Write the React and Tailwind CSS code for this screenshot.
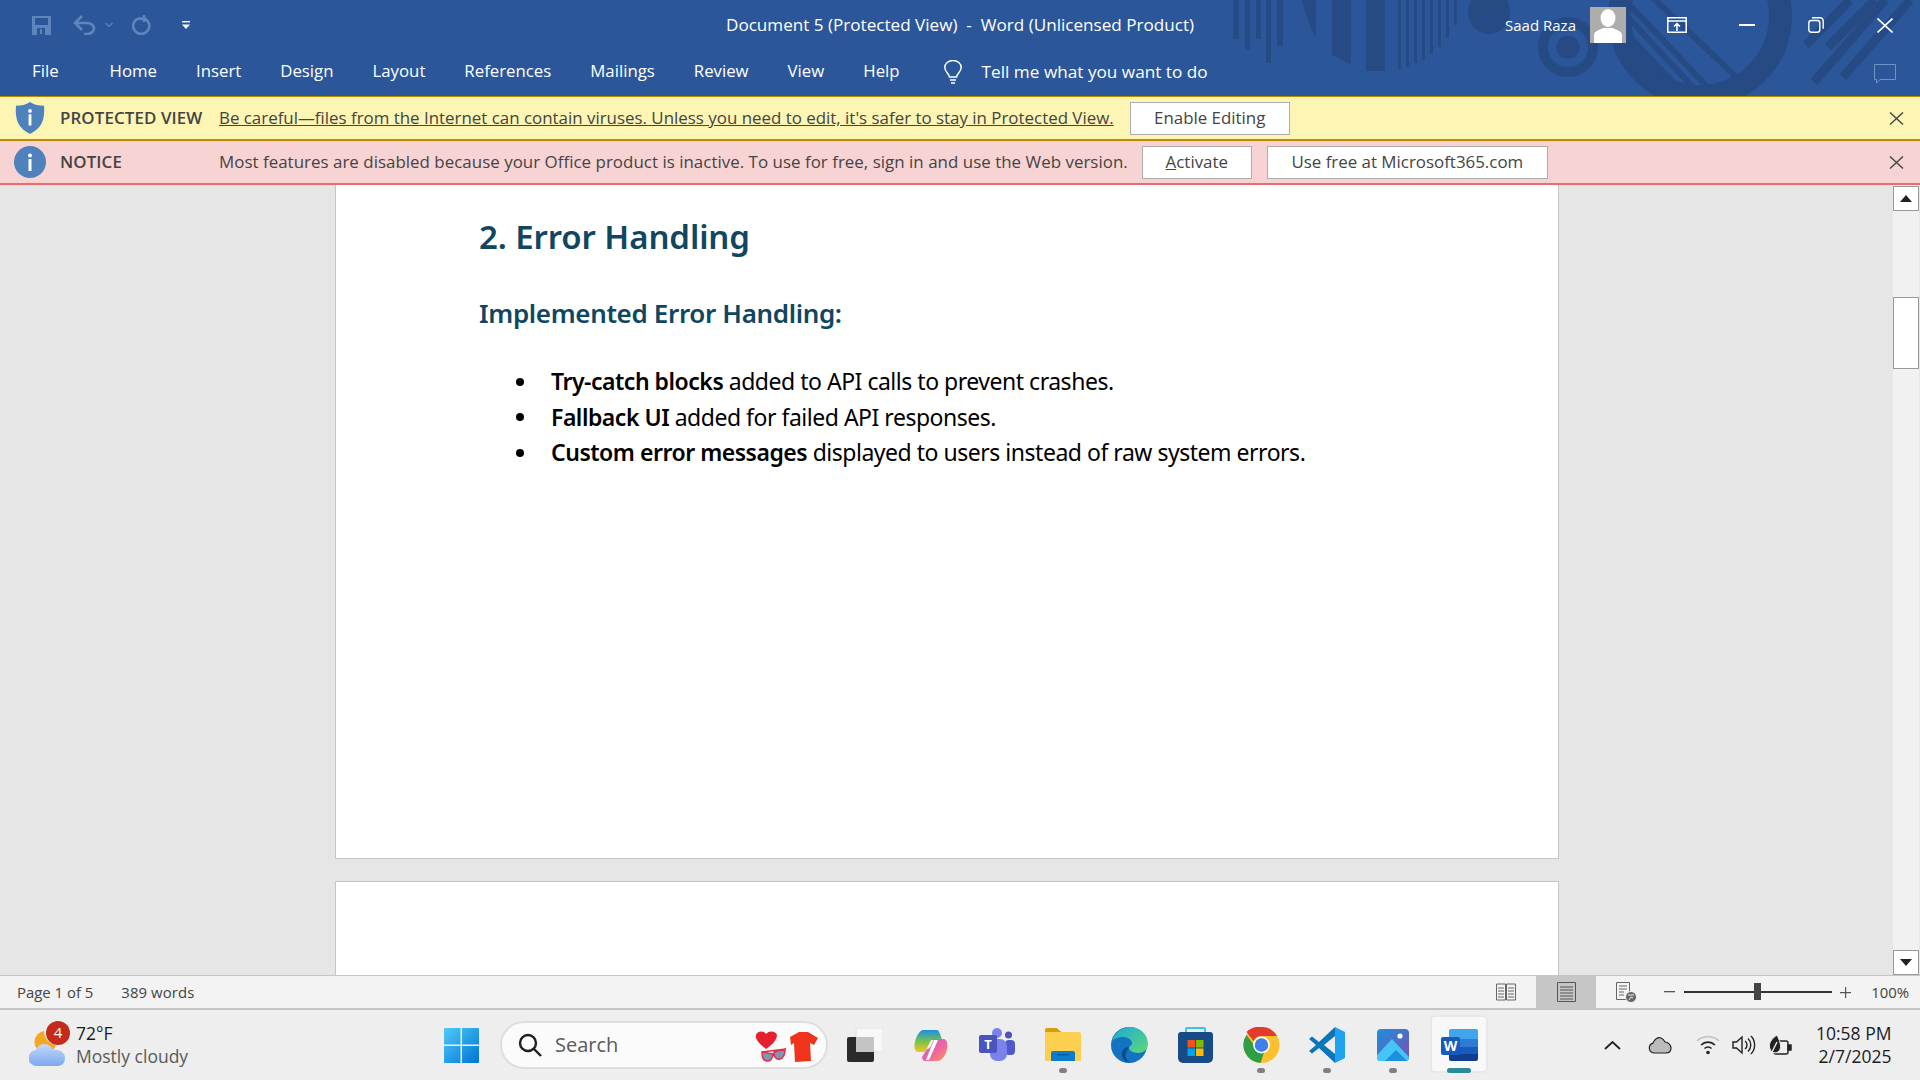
import { useState } from "react"

const uiFont = "font-['Open_Sans','Noto_Sans',sans-serif]"
const docFont = "font-['Noto_Sans','Open_Sans',sans-serif]"

const tabs = ["Home", "Insert", "Design", "Layout", "References", "Mailings", "Review", "View", "Help"]

const bullets = [
  ["Try-catch blocks", " added to API calls to prevent crashes."],
  ["Fallback UI", " added for failed API responses."],
  ["Custom error messages", " displayed to users instead of raw system errors."],
]

// Decorative pattern behind the title bar
const TitlePattern = () => (
  <svg className="absolute top-0 left-[1220px]" width="700" height="96" viewBox="0 0 700 96" fill="#264a84">
    <defs>
      <clipPath id="ringClip"><circle cx="480" cy="16" r="70" /></clipPath>
    </defs>
    <rect x="13" y="0" width="6" height="39" />
    <rect x="25" y="0" width="5" height="50" />
    <rect x="36" y="0" width="5" height="39" />
    <rect x="46" y="0" width="5" height="63" />
    <rect x="57" y="0" width="6" height="46" />
    <path d="M82 0Q86 20 96 37V0z" />
    <path d="M112 0V55L131 65V0z" />
    <rect x="146" y="0" width="19" height="71" />
    <rect x="178" y="0" width="3" height="69" />
    <rect x="186" y="0" width="3" height="67" />
    <rect x="194" y="0" width="3" height="63" />
    <rect x="202" y="0" width="3" height="60" />
    <rect x="210" y="0" width="3" height="54" />
    <rect x="218" y="0" width="3" height="47" />
    <rect x="226" y="0" width="3" height="38" />
    <rect x="234" y="0" width="3" height="25" />
    <ellipse cx="269" cy="12" rx="21" ry="22" />
    <circle cx="348" cy="47" r="25" fill="none" stroke="#264a84" strokeWidth="10" />
    <circle cx="348" cy="47" r="11.5" />
    <path fillRule="evenodd" d="M480 -76a92 92 0 1 1 0 184a92 92 0 1 1 0-184zM480 -53a69 69 0 1 0 0 138a69 69 0 1 0 0-138z" />
    <g clipPath="url(#ringClip)" stroke="#264a84" strokeWidth="6" fill="none">
      <path d="M405 32L465 95M405 14L480 95M405 0L495 95M430 -5L530 90" />
    </g>
    <g stroke="#264a84" strokeWidth="9" fill="none">
      <path d="M586 45L630 0M608 47L655 0M594 82L665 0M623 77L690 0" />
    </g>
  </svg>
)

const QuickAccess = () => (
  <div className="flex items-center pl-[32px] text-[#5e86bd]">
    <svg width="19" height="19" viewBox="0 0 19 19" fill="currentColor">
      <path fillRule="evenodd" d="M0 0h19v19H0zM3 2v7h13V2zM5 12v7h8v-7zm3 1h2v5H8z" />
    </svg>
    <svg className="ml-[22px]" width="23" height="20" viewBox="0 0 23 20" fill="none" stroke="currentColor" strokeWidth="2.6">
      <path d="M9 1L2 8l7 7M2 8h12a7 5.5 0 0 1 0 11h-3" />
    </svg>
    <svg className="ml-[9px]" width="8" height="6" viewBox="0 0 8 6" fill="none" stroke="currentColor" strokeWidth="1.2">
      <path d="M0.5 1l3.5 3.5L7.5 1" />
    </svg>
    <svg className="ml-[19px]" width="20" height="20" viewBox="0 0 20 20" fill="none" stroke="currentColor" strokeWidth="2.6">
      <path d="M12 3.4A8 8 0 1 1 6 3.6M12 0v7M12 3.6H6" />
    </svg>
    <svg className="ml-[30px]" width="8" height="8" viewBox="0 0 8 8" fill="white">
      <rect x="0" y="0" width="8" height="1.4" />
      <path d="M0 3.5h8L4 8z" />
    </svg>
  </div>
)

const WindowControls = () => (
  <div className="flex items-center text-white">
    <span className="text-[15px] leading-none mr-[14px]">Saad Raza</span>
    <div className="w-[36px] h-[36px] bg-[#adadad] overflow-hidden">
      <svg width="36" height="36" viewBox="0 0 36 36" fill="white">
        <ellipse cx="18" cy="11" rx="7.5" ry="9" />
        <path d="M4 36v-8c0-4 6-5 9-7h10c3 2 9 3 9 7v8z" />
      </svg>
    </div>
    <svg className="ml-[41px]" width="20" height="16" viewBox="0 0 20 16" fill="none" stroke="white" strokeWidth="1.5">
      <path d="M0.8 0.8h18.4v14.4H0.8zM0.8 4h18.4M10 14V7M7 9.5l3-3 3 3" />
    </svg>
    <svg className="ml-[52px]" width="16" height="2" viewBox="0 0 16 2" fill="white">
      <rect width="16" height="2" />
    </svg>
    <svg className="ml-[53px]" width="16" height="16" viewBox="0 0 16 16" fill="none" stroke="white" strokeWidth="1.4">
      <rect x="0.8" y="3.5" width="11" height="11.8" rx="2.5" />
      <path d="M4 0.8h8a3 3 0 0 1 3.2 3v8" />
    </svg>
    <svg className="ml-[53px]" width="16" height="15" viewBox="0 0 16 15" fill="none" stroke="white" strokeWidth="1.6">
      <path d="M0.5 0.5l15 14M15.5 0.5l-15 14" />
    </svg>
  </div>
)

const CloseX = () => (
  <svg width="15" height="13" viewBox="0 0 15 13" fill="none" stroke="#444444" strokeWidth="1.4">
    <path d="M1 0.5l13 12M14 0.5l-13 12" />
  </svg>
)

const InfoMark = () => (
  <>
    <circle cx="16" cy="9.5" r="2" fill="white" />
    <rect x="14.5" y="13" width="3" height="12" fill="white" />
  </>
)

const BarButton = ({ className, children }) => (
  <button className={`h-[33px] bg-white border border-[#adadad] text-[#444444] text-[16.9px] leading-none ${className}`}>
    {children}
  </button>
)

const Icon = {
  taskview: (
    <svg width="36" height="34" viewBox="0 0 36 34">
      <rect x="9" y="0" width="27" height="24" rx="1.5" fill="#f8f8f8" stroke="#e0e0e0" />
      <rect x="0" y="9" width="27" height="25" rx="2" fill="#2a2a2a" />
      <rect x="9" y="9" width="18" height="15" fill="#c4c4c4" />
    </svg>
  ),
  copilot: (
    <svg width="34" height="32" viewBox="0 0 34 32">
      <defs>
        <linearGradient id="cpa" x1="0" y1="0" x2="0" y2="1">
          <stop offset="0" stopColor="#1b8fe8" />
          <stop offset="0.55" stopColor="#7fc641" />
          <stop offset="1" stopColor="#f7c325" />
        </linearGradient>
        <linearGradient id="cpb" x1="0" y1="0" x2="1" y2="1">
          <stop offset="0" stopColor="#b45ae0" />
          <stop offset="0.6" stopColor="#f0699c" />
          <stop offset="1" stopColor="#ff9a4d" />
        </linearGradient>
      </defs>
      <path d="M9 1h14c2 0 4 6 5 10H17L11 23H4C0 22 0 17 1 13 2 8 5 2 9 1z" fill="url(#cpa)" />
      <path d="M26 10h4c3 1 4 5 3 10-1 5-4 11-9 12H11c-2 0-3-2-3-4l5-8c2 0 3-1 4-3l3-7z" fill="url(#cpb)" />
      <path d="M12 31l8-20h4l-9 20z" fill="#ffffff" />
    </svg>
  ),
  teams: (
    <svg width="36" height="33" viewBox="0 0 36 33">
      <circle cx="29.500" cy="7" r="3.500" fill="#4b53bc" />
      <circle cx="18" cy="5" r="5" fill="#7b83eb" />
      <rect x="26" y="12" width="10" height="15" rx="4" fill="#5059c9" />
      <rect x="11" y="11" width="17" height="22" rx="7" fill="#7b83eb" />
      <rect x="0" y="7" width="18" height="18" rx="2" fill="#4b53bc" />
      <text x="9" y="21" textAnchor="middle" fill="white" fontSize="13" fontWeight="700" fontFamily="Open Sans">T</text>
    </svg>
  ),
  explorer: (
    <svg width="36" height="33" viewBox="0 0 36 33">
      <path d="M0 2a2 2 0 0 1 2-2h10l3 3h1v2H0z" fill="#d99f0b" />
      <path d="M0 4h34a2 2 0 0 1 2 2v27H0z" fill="#fcd04e" />
      <path d="M6 25a2 2 0 0 1 2-2h20a2 2 0 0 1 2 2v8H6z" fill="#0b7ccb" />
      <rect x="12" y="26" width="12" height="1.400" fill="#075a99" />
    </svg>
  ),
  edge: (
    <svg width="37" height="36" viewBox="0 0 37 36">
      <defs>
        <linearGradient id="edg" x1="0" y1="0" x2="1" y2="1">
          <stop offset="0" stopColor="#1fa6dc" />
          <stop offset="1" stopColor="#5cdb73" />
        </linearGradient>
      </defs>
      <circle cx="18" cy="18" r="18" fill="#1173c1" />
      <path d="M1 14C4 5 11 0 19 0c11 0 18 8 18 17 0 6-5 9-10 9-6 0-9-3-9-5 0-2 3-2 3-5 0-3-4-6-9-6-5 0-9 2-11 4z" fill="url(#edg)" />
      <path d="M18 20c-5 0-8 4-7 9 1 4 4 6 8 7-4-3-5-7-4-10 1-3 3-5 3-6z" fill="#0c4f88" />
    </svg>
  ),
  store: (
    <svg width="35" height="36" viewBox="0 0 35 36">
      <path d="M8 6V2a1 1 0 0 1 1-1h17a1 1 0 0 1 1 1v4" fill="none" stroke="#35c6f4" strokeWidth="2" />
      <path d="M0 8a3 3 0 0 1 3-3h29a3 3 0 0 1 3 3v23a5 5 0 0 1-5 5H5a5 5 0 0 1-5-5z" fill="#174b86" />
      <rect x="9.500" y="13" width="7.500" height="7.500" fill="#f25022" />
      <rect x="18" y="13" width="7.500" height="7.500" fill="#7fba00" />
      <rect x="9.500" y="21.500" width="7.500" height="7.500" fill="#00a4ef" />
      <rect x="18" y="21.500" width="7.500" height="7.500" fill="#ffb900" />
    </svg>
  ),
  chrome: (
    <svg width="37" height="36" viewBox="0 0 36 36">
      <circle cx="18" cy="18" r="18" fill="#fbc02d" />
      <path d="M18 0a18 18 0 0 1 15.600 9H18a9 9 0 0 0-8 5L3 5A18 18 0 0 1 18 0z" fill="#e33b2e" />
      <path d="M3 8l7.500 10a8 8 0 0 0 10 7.500L17 36A18 18 0 0 1 3 8z" fill="#2f9e44" />
      <circle cx="18" cy="18" r="8.400" fill="white" />
      <circle cx="18" cy="18" r="6.800" fill="#3f7fe8" />
    </svg>
  ),
  vscode: (
    <svg width="36" height="36" viewBox="0 0 36 36">
      <path d="M26 0L36 5V31L26 36z" fill="#1fa2ef" />
      <path d="M26 0L10 15L3 9.500L0 12L7 18L0 24L3 26.500L10 21L26 36V27L15 18L26 9z" fill="#0a75bd" />
    </svg>
  ),
  photos: (
    <svg width="32" height="32" viewBox="0 0 32 32">
      <defs>
        <linearGradient id="pha" x1="0" y1="0" x2="1" y2="1">
          <stop offset="0" stopColor="#1d8fdc" />
          <stop offset="1" stopColor="#7b4fb3" />
        </linearGradient>
      </defs>
      <rect width="32" height="32" rx="4" fill="url(#pha)" />
      <circle cx="23" cy="7" r="2.600" fill="white" />
      <path d="M0 26L15 10l17 18v1a3 3 0 0 1-3 3H3a3 3 0 0 1-3-3z" fill="#43c5f5" />
      <path d="M8 32l11-11 11 11z" fill="#1d8fdc" />
    </svg>
  ),
  word: (
    <svg width="37" height="32" viewBox="0 0 37 32">
      <rect x="8" y="0" width="29" height="11" rx="2" fill="#41a5ee" />
      <rect x="8" y="10" width="29" height="8" fill="#2b7cd3" />
      <rect x="8" y="18" width="29" height="7" fill="#185abd" />
      <path d="M8 25h29v5a2 2 0 0 1-2 2H10a2 2 0 0 1-2-2z" fill="#103f91" />
      <rect x="0" y="8" width="19" height="18" rx="2" fill="#185abd" />
      <text x="9.500" y="22" textAnchor="middle" fill="white" fontSize="14" fontWeight="700" fontFamily="Open Sans">W</text>
    </svg>
  ),
}

const taskApps = [
  { key: "taskview" },
  { key: "copilot" },
  { key: "teams" },
  { key: "explorer", dot: true },
  { key: "edge" },
  { key: "store" },
  { key: "chrome", dot: true },
  { key: "vscode", dot: true },
  { key: "photos", dot: true },
  { key: "word", active: true },
]

const TaskApp = ({ app }) => (
  <div className="relative w-[66px] h-[70px] flex items-center justify-center">
    {app.active && <div className="absolute left-[4px] top-[5px] w-[58px] h-[58px] bg-[#f8f8f8] border-2 border-[#e8e8e8] rounded-[5px]" />}
    <div className="relative pb-[1px]">{Icon[app.key]}</div>
    {app.dot && <div className="absolute left-[29px] top-[58px] w-[8px] h-[5px] rounded-full bg-[#808080]" />}
    {app.active && <div className="absolute left-[21px] top-[58px] w-[24px] h-[5px] rounded-full bg-[#2a8a99]" />}
  </div>
)

const App = () => {
  const [pages] = useState(5)

  return (
    <div className={`flex flex-col w-[1920px] h-[1080px] overflow-hidden bg-[#e6e6e6] ${uiFont}`}>
      {/* title bar + tabs */}
      <div className="relative h-[96px] shrink-0 bg-[#2b579a] text-white">
        <TitlePattern />
        <div className="relative h-[50px] flex items-center justify-between pr-[27px]">
          <QuickAccess />
          <div className="absolute left-[726px] top-[13px] text-[17.1px] leading-[24px] whitespace-pre">Document 5 (Protected View)  -  Word (Unlicensed Product)</div>
          <WindowControls />
        </div>
        <div className="relative h-[46px] flex items-center pl-[32px] pb-[3px] text-[16.8px] leading-none">
          <span className="mr-[51px]">File</span>
          <div className="flex items-center gap-[39px]">
            {tabs.map((t) => <span key={t}>{t}</span>)}
          </div>
          <svg className="ml-[44px]" width="18" height="24" viewBox="0 0 18 24" fill="none" stroke="white" strokeWidth="1.500">
            <path d="M5.500 17c0-3-4.700-5-4.700-9.500a8.200 7 0 0 1 16.400 0c0 4.500-4.700 6.500-4.700 9.500zM6 20h6M7 23h4" />
          </svg>
          <span className="ml-[20px] text-[17.2px]">Tell me what you want to do</span>
          <svg className="absolute left-[1874px] top-[14px]" width="22" height="20" viewBox="0 0 22 20" fill="none" stroke="#6f93c4" strokeWidth="1">
            <path d="M0.500 0.500h21v15H6l-3.500 3.500v-3.500h-2z" />
          </svg>
        </div>
      </div>

      {/* protected view bar */}
      <div className="h-[45px] shrink-0 flex items-center bg-[#fcf5b4] border-t border-b-2 border-[#c08a00] text-[#444444] text-[16.9px] leading-none">
        <svg className="ml-[15px]" width="30" height="32" viewBox="0 0 32 34" fill="#4f81bd">
          <path d="M16 0c4 3 10 4 15 4 1 14-2 24-15 30C3 28 0 18 1 4c5 0 11-1 15-4z" />
          <InfoMark />
        </svg>
        <span className="ml-[15px] w-[159px] pt-[1px] font-semibold tracking-[0.1px]">PROTECTED VIEW</span>
        <span className="pt-[1px] underline">Be careful—files from the Internet can contain viruses. Unless you need to edit, it's safer to stay in Protected View.</span>
        <BarButton className="ml-[16px] w-[160px]">Enable Editing</BarButton>
        <div className="ml-auto mr-[16px]"><CloseX /></div>
      </div>

      {/* notice bar */}
      <div className="h-[44px] shrink-0 flex items-center bg-[#f8d3d3] border-b-2 border-[#ec6a6e] text-[#444444] text-[16.9px] leading-none">
        <svg className="ml-[14px]" width="32" height="32" viewBox="0 0 32 32" fill="#4f81bd">
          <circle cx="16" cy="16" r="16" />
          <InfoMark />
        </svg>
        <span className="ml-[14px] w-[159px] pt-[1px] font-semibold tracking-[0.1px]">NOTICE</span>
        <span className="pt-[1px] tracking-[0.03px]">Most features are disabled because your Office product is inactive. To use for free, sign in and use the Web version.</span>
        <BarButton className="ml-[14px] w-[110px]"><span className="underline">A</span>ctivate</BarButton>
        <BarButton className="ml-[15px] w-[281px]">Use free at Microsoft365.com</BarButton>
        <div className="ml-auto mr-[16px]"><CloseX /></div>
      </div>

      {/* document */}
      <div className="flex-1 min-h-0 flex">
        <div className="flex-1 min-w-0 overflow-hidden pl-[335px]">
          <div className={`w-[1224px] h-[674px] bg-white border-x border-b border-[#c6c6c6] pl-[143px] pt-[28px] ${docFont}`}>
            <h1 className="text-[33px] leading-[48px] font-semibold text-[#0f4761] tracking-[-0.1px]">2. Error Handling</h1>
            <h2 className="mt-[34px] text-[26px] leading-[36px] font-semibold text-[#0f4761] tracking-[-0.35px]">Implemented Error Handling:</h2>
            <ul className="mt-[33px] pl-[37px] text-[23px] leading-[35.5px] text-black tracking-[-0.48px]">
              {bullets.map((b) => (
                <li key={b[0]} className="flex items-center">
                  <span className="w-[8px] h-[8px] rounded-full bg-black mr-[27px]" />
                  <span><b className="font-semibold">{b[0]}</b>{b[1]}</span>
                </li>
              ))}
            </ul>
          </div>
          <div className="mt-[22px] w-[1224px] h-[300px] bg-white border border-[#c6c6c6]" />
        </div>
        <div className="w-[26px] mr-[1px] shrink-0 flex flex-col pt-[1px] bg-[#f1f1f1]">
          <div className="h-[25px] bg-white border border-[#999999] flex items-center justify-center">
            <svg width="12" height="7" viewBox="0 0 12 7" fill="#222222"><path d="M6 0l6 7H0z" /></svg>
          </div>
          <div className="mt-[86px] h-[72px] bg-white border border-[#999999]" />
          <div className="mt-auto h-[25px] bg-white border border-[#999999] flex items-center justify-center">
            <svg width="12" height="7" viewBox="0 0 12 7" fill="#222222"><path d="M0 0h12L6 7z" /></svg>
          </div>
        </div>
      </div>

      {/* status bar */}
      <div className="h-[33px] shrink-0 flex items-center bg-[#f3f3f3] border-t border-[#c6c6c6] text-[#444444] text-[14.9px] leading-none">
        <span className="ml-[17px]">Page 1 of {pages}</span>
        <span className="ml-[28px] tracking-[0.1px]">389 words</span>
        <div className="ml-auto flex items-center h-full">
          <svg width="20" height="19" viewBox="0 0 20 19" fill="none" stroke="#666666">
            <path d="M0.500 1h9v16h-9zM10.500 1h9v16h-9zM2 5h6M2 8h6M2 11h6M2 14h6M12 5h6M12 8h6M12 11h6M12 14h6" />
          </svg>
          <div className="ml-[20px] w-[60px] h-full bg-[#c6c6c6] flex items-center justify-center">
            <svg width="19" height="20" viewBox="0 0 19 20" fill="none" stroke="#555555">
              <path d="M0.500 0.500h18v19h-18zM3 5h13M3 8h13M3 11h13M3 14h13M3 17h13" />
            </svg>
          </div>
          <svg className="ml-[20px]" width="21" height="21" viewBox="0 0 21 21" fill="none" stroke="#666666">
            <path d="M0.500 0.500h13v17h-13zM3 4h8M3 7h8M3 10h5M3 13h5" />
            <circle cx="15" cy="15" r="5.500" fill="#666666" stroke="#f3f3f3" />
            <path d="M12 13h6M13 18l2-3 2 1" stroke="#f3f3f3" />
          </svg>
          <svg className="ml-[27px]" width="11" height="2" viewBox="0 0 11 2" fill="#555555"><rect width="11" height="1.300" /></svg>
          <div className="ml-[9px] relative w-[148px] h-[2px] bg-[#333333]">
            <div className="absolute left-[70px] top-[-8px] w-[7px] h-[17px] bg-[#444444]" />
          </div>
          <svg className="ml-[8px]" width="11" height="11" viewBox="0 0 11 11" fill="#555555"><path d="M0 5h11v1.200H0zM5 0h1.200v11H5z" /></svg>
          <span className="ml-[20px] mr-[11px]">100%</span>
        </div>
      </div>

      {/* windows taskbar */}
      <div className="h-[72px] shrink-0 flex items-center bg-[#eeeeee] border-t-2 border-[#c4c4c4] text-[17.5px] leading-none">
        <div className="relative ml-[29px] w-[47px] h-[45px]">
          <svg width="38" height="44" viewBox="0 0 38 44">
            <defs>
              <linearGradient id="wxc" x1="0" y1="0" x2="0" y2="1">
                <stop offset="0" stopColor="#c4dafa" />
                <stop offset="1" stopColor="#7ba8ef" />
              </linearGradient>
            </defs>
            <path d="M15 8a11 11 0 1 0 12 14A14 14 0 0 1 15 8z" fill="#f5a623" />
            <path d="M8 43a8 8 0 0 1-1-16c2-6 9-8 14-4 2 1 3 3 3 4 6-1 12 2 12 8s-4 8-8 8z" fill="url(#wxc)" />
          </svg>
          <div className="absolute left-[17px] top-[-2px] w-[24px] h-[24px] rounded-full bg-[#c42b1c] text-white text-[15px] flex items-center justify-center">4</div>
        </div>
        <div className="w-[125px] flex flex-col gap-[6px]">
          <span className="text-[#1c1c1c]">72°F</span>
          <span className="text-[#5a5a5a]">Mostly cloudy</span>
        </div>
        <svg className="ml-[243px] mr-[21px]" width="35" height="35" viewBox="0 0 35 35">
          <defs>
            <linearGradient id="win" x1="0" y1="0" x2="1" y2="1">
              <stop offset="0" stopColor="#4fcbfb" />
              <stop offset="1" stopColor="#0074d4" />
            </linearGradient>
          </defs>
          <path d="M0 1a1 1 0 0 1 1-1h15.500v16.500H0zM18 0h16a1 1 0 0 1 1 1v15.500H18zM0 18h16.500v17H1a1 1 0 0 1-1-1zM18 18h17v16a1 1 0 0 1-1 1H18z" fill="url(#win)" />
        </svg>
        <div className="w-[328px] h-[48px] rounded-full bg-[#fbfbfb] border-2 border-[#dedede] flex items-center pl-[16px] pr-[6px]">
          <svg width="24" height="24" viewBox="0 0 24 24" fill="none" stroke="#1f1f1f" strokeWidth="2.400">
            <circle cx="10" cy="10" r="8" />
            <path d="M16 16l7 7" />
          </svg>
          <span className="ml-[13px] text-[20px] text-[#5a5a5a]">Search</span>
          <svg className="ml-auto" width="66" height="38" viewBox="0 0 66 38">
            <path d="M12 23C6 18 1 14 2 9c1-4 7-5 10-1 3-4 10-3 11 1 0 5-5 10-11 14z" fill="#e8202e" />
            <path d="M8 26l24-3M8 26c0 6 2 9 5 9s6-2 6-7zM20 26c0 5 2 8 6 7s5-5 5-10z" fill="#7c97b6" stroke="#e0304a" strokeWidth="1.500" />
            <path d="M36 11l9-5h9l10 6-4 7-4-2 1 18-16 1-1-19-3 2z" fill="#f0341c" />
          </svg>
        </div>
        <div className="ml-[4px] flex items-center">
          {taskApps.map((a) => <TaskApp key={a.key} app={a} />)}
        </div>
        <div className="flex items-center ml-[112px]">
          <svg width="17" height="9" viewBox="0 0 17 9" fill="none" stroke="#222222" strokeWidth="1.800"><path d="M1 8l7.500-7L16 8" /></svg>
          <svg className="ml-[27px]" width="24" height="18" viewBox="0 0 24 18" fill="#bbbbbb" stroke="#222222" strokeWidth="1.200">
            <path d="M6 17a5 5 0 0 1-1-9.800C6 3 10 1 13 2c2 .6 3 2 4 4 3 0 6 3 6 6 0 3-2 5-5 5z" />
          </svg>
          <svg className="ml-[24px]" width="24" height="20" viewBox="0 0 24 20" fill="none" stroke="#222222" strokeWidth="1.600">
            <path d="M1 6a16 16 0 0 1 22 0" stroke="#c4c4c4" />
            <path d="M5 10a10 10 0 0 1 14 0M8.500 13.500a5 5 0 0 1 7 0" />
            <circle cx="12" cy="17.500" r="1.800" fill="#222222" stroke="none" />
          </svg>
          <svg className="ml-[12px]" width="24" height="20" viewBox="0 0 24 20" fill="none" stroke="#222222" strokeWidth="1.400">
            <path d="M1 7h3.500L10 2v16l-5.500-5H1zM13 6a5 5 0 0 1 0 8M16 3.500a9 9 0 0 1 0 13M19 1a13 13 0 0 1 0 18" />
          </svg>
          <svg className="ml-[12px]" width="24" height="22" viewBox="0 0 24 22" fill="none" stroke="#222222" strokeWidth="1.400">
            <rect x="6" y="7" width="14" height="13" rx="2" />
            <path d="M20 11h3v5h-3z" fill="#222222" />
            <path d="M9 1C3 5 0 10 2 15c1 3 4 5 8 3 4-3 3-9-1-17z" fill="#222222" stroke="#eeeeee" strokeWidth="1" />
            <path d="M3 20L9 8" stroke="#eeeeee" />
          </svg>
          <div className="ml-[24px] flex flex-col items-end gap-[6px] text-[#1c1c1c]">
            <span>10:58 PM</span>
            <span>2/7/2025</span>
          </div>
        </div>
      </div>
    </div>
  )
}

export default App
